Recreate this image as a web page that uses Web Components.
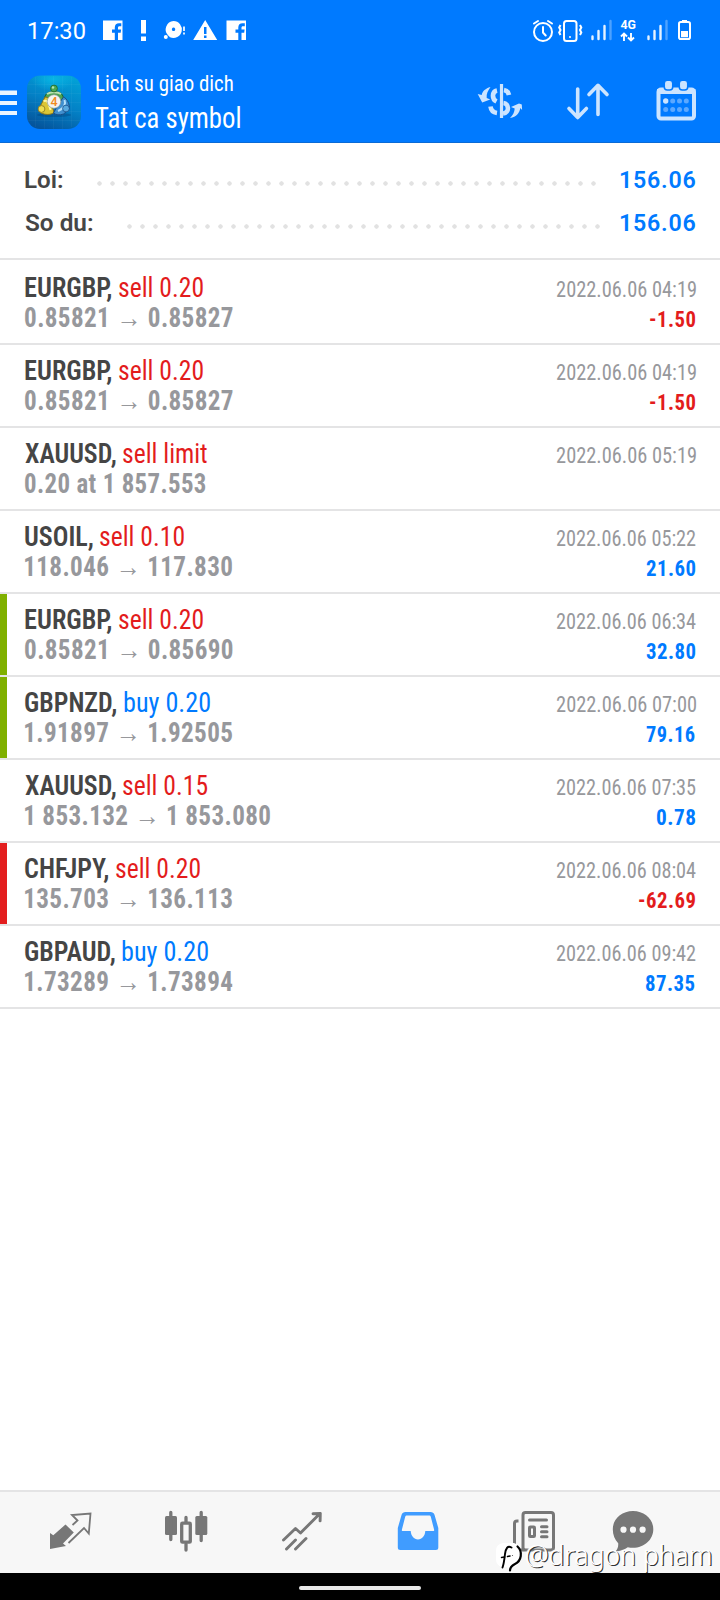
<!DOCTYPE html>
<html lang="vi">
<head>
<meta charset="utf-8">
<title>Lich su giao dich</title>
<style>
html,body{margin:0;padding:0;background:#fff}
body{width:720px;height:1600px;overflow:hidden;font-family:Roboto,"Liberation Sans",sans-serif}
</style>
</head>
<body>
<trade-app></trade-app>
<script>
// Text set to an exact ink width, so that a line keeps its measured length.
const ctx = document.createElement('canvas').getContext('2d');
class FitText extends HTMLElement {
  connectedCallback() {
    const r = this.attachShadow({mode: 'open'});
    const size = this.getAttribute('size'), w = +this.getAttribute('w');
    const weight = this.getAttribute('weight') || 400;
    const fam = this.getAttribute('family') || 'Roboto Condensed';
    const sp = this.getAttribute('spacing') || 0;
    r.innerHTML = `<style>
      :host{display:inline-block;width:${w}px;white-space:pre;flex:none;font:${weight} ${size}px "${fam}",Roboto,sans-serif;line-height:inherit;letter-spacing:${sp}px}
      span{display:inline-block;transform-origin:0 50%}</style><span><slot></slot></span>`;
    ctx.font = `${weight} ${size}px "${fam}", Roboto, sans-serif`;
    ctx.letterSpacing = sp + 'px';
    const m = ctx.measureText(this.textContent);
    const ink = m.actualBoundingBoxRight + m.actualBoundingBoxLeft;
    const k = w / ink;
    r.querySelector('span').style.transform = `translateX(${m.actualBoundingBoxLeft * k}px) scaleX(${k})`;
  }
}
customElements.define('fit-text', FitText);

// name: [x, y, width, height, drawing] — each drawing uses the coordinates of its box.
const fb = x => `<path fill="#fff" fill-rule="evenodd" d="M${x} 20.500h19.500V40h-4.500v-7.300h2.700l.4-3.200h-3.100v-1.800c0-1 .4-1.500 1.600-1.500h1.700v-2.900c-.4 0-1.300-.1-2.300-.1-2.600 0-4.200 1.500-4.200 4.200v2.100h-2.800v3.200h2.800V40H${x}z"/>`;
const sig = x => `<g stroke-width="2.400" stroke="#fff" stroke-linecap="round"><path d="M${x} 36.500v2.500M${x+6} 31v8M${x+12} 26v13" stroke-opacity=".9"/><path d="M${x+18} 21v18" stroke-opacity=".3"/></g>`;
const ICONS = {
  fb1: [100,0,30,60, fb(103)],
  alert: [130,0,25,60, '<path fill="#fff" d="M141 20h5v13.500h-5zM141 36.500h5V41h-5z"/>'],
  bubble: [155,0,35,60, '<path fill="#fff" fill-rule="evenodd" d="M173.500 21a8.500 8.500 0 1 1-3.500 16.300l-2-2a8.500 8.500 0 0 1 5.500-14.300zm0 6.600a1.700 1.700 0 1 0 .1 0z"/><circle cx="165.800" cy="37" r="2" fill="#fff"/><path stroke="#fff" stroke-width="1.700" d="M184 26.500v4.500M184 32.500v2"/>'],
  warn: [190,0,31,60, '<path fill="#fff" fill-rule="evenodd" d="M205.200 20l12 20h-24zm-1.200 7v7h2.500v-7zm0 8.500V38h2.500v-2.500z"/>'],
  fb2: [221,0,30,60, fb(226.500)],
  alarm: [530,0,25,60, '<g fill="none" stroke="#fff" stroke-width="2" stroke-linecap="round"><circle cx="543" cy="32" r="9"/><path d="M543 27v5.500l2.700 3M534 23.500l4-2.500M548 21l4 2.500"/></g>'],
  vibrate: [555,0,31,60, '<g fill="none" stroke="#fff" stroke-width="2"><rect x="564" y="21" width="12.500" height="20" rx="2.500"/><path stroke-width="2" d="M560.500 25l-1.300 2.500 1.300 2.500-1.300 2.500 1.300 2.500M580 25l1.300 2.500-1.300 2.500 1.300 2.500-1.300 2.500"/></g><circle cx="570" cy="37" r="1" fill="#fff"/>'],
  signal1: [586,0,32,60, sig(592.500)],
  lte: [618,0,22,60, '<text x="620.500" y="29" fill="#fff" font-family="Roboto" font-weight="700" font-size="13" textLength="15.500" lengthAdjust="spacingAndGlyphs">4G</text><path fill="none" stroke="#fff" stroke-width="1.900" d="M624 41v-6.500M621 36.500l3-3 3 3M631 33v6.500M628 37.500l3 3 3-3"/>'],
  signal2: [640,0,32,60, sig(648.500)],
  battery: [672,0,24,60, '<rect x="679" y="22" width="11" height="17" rx="1.800" fill="none" stroke="#fff" stroke-width="2"/><path fill="#fff" d="M682 20h5v2h-5zM681 31h7v6.300h-7z"/>'],
  menu: [0,60,27,82, '<path fill="#fff" d="M0 90.500h17v4.500H0zM0 101h17v4H0zM0 111h17v4H0z" fill-opacity=".92"/>'],
  app: [27,60,69,82, `<defs><linearGradient id="g" x1=".7" y1="0" x2=".3" y2="1"><stop offset="0" stop-color="#02a0d6"/><stop offset=".5" stop-color="#0381c6"/><stop offset="1" stop-color="#05549b"/></linearGradient>
    <radialGradient id="s"><stop offset="0" stop-color="#08b4e4"/><stop offset="1" stop-color="#08b4e4" stop-opacity="0"/></radialGradient>
    <clipPath id="c"><rect x="27" y="75.500" width="54" height="53.500" rx="13"/></clipPath></defs>
    <g clip-path="url(#c)"><rect x="27" y="75.500" width="54" height="53.500" fill="url(#g)"/><ellipse cx="53" cy="79" rx="22" ry="12" fill="url(#s)"/>
    <path stroke="#fff" stroke-opacity=".04" d="M35.500 77v50M44.500 76v53M53.500 76v53M62.500 76v53M71.500 77v50M28 84.500h52M27 93.500h54M27 102.500h54M27 111.500h54M28 120.500h52"/></g>
    <ellipse cx="54" cy="115" rx="17" ry="2" fill="#023a70" opacity=".35"/>
    <g stroke-linejoin="round"><path d="M44.500 99.500c0-5 3-8 9.500-8s9.500 3 9.500 8l-4 3h-11z" fill="#4ba352" stroke="#1d6528"/><path d="M47 94c3-2.300 11-2.300 14 0" stroke="#b8e0b1" stroke-width="1.800" fill="none"/><circle cx="54" cy="88.500" r="3.400" fill="#4aa853" stroke="#1d6528" stroke-width=".8"/><circle cx="53" cy="87.500" r="1.200" fill="#b4e3ae"/>
    <path d="M45 97c3 0 5 2 6 5l3 10.500c-3 2.500-9 2.500-13 .5l-2.500-3.500z" fill="#dcc636" stroke="#85721c"/><path d="M43.500 101c3-1 4 0 5.500 4l1.500 5" stroke="#fff6a2" stroke-width="2" fill="none"/><circle cx="41.500" cy="109" r="3.400" fill="#f0df52" stroke="#85721c" stroke-width=".8"/>
    <path d="M63.500 97c4 2 6 7 6 12l-6 5c-4 1.500-7.500 1-10-1l5-9z" fill="#3f8fcf" stroke="#194f89"/><path d="M64.500 100c1.500 4 0 8-6.500 11" stroke="#b4e0fa" stroke-width="2" fill="none"/><circle cx="66" cy="108.500" r="3.400" fill="#58a9df" stroke="#194f89" stroke-width=".8"/></g>
    <circle cx="54" cy="101.500" r="6.800" fill="#f4f4f0" stroke="#8d9a95" stroke-width=".7"/><text x="54" y="106" text-anchor="middle" font-family="Roboto" font-weight="500" font-size="12.500" fill="#f08a1c">4</text>`],
  money: [474,60,54,82, `<g stroke="#cce4ff" fill="none" stroke-width="4.600"><path stroke-width="3.200" d="M501.500 84v34"/>
    <path d="M497 90.500c-5 1-5.500 8.500-.5 11M490.500 106.500c.5 4 3 6 6.500 6.500M504 90c3 .5 4.500 2 5 5M503.500 103c5.500.5 6.500 9.500-.5 10.500"/></g>
    <g fill="#cce4ff"><path d="M490.500 87c-5 1.500-8 4-8.800 8l-4-1 4.500 8.500 8-3-3.500-1.500c-.5-4 1.300-7.500 3.800-11z"/><path d="M510 118c6.500-1.200 9.600-5 10.300-10l1.800 2-.3-5.500-2.800-.9-8 3.500 3.700 1.300c-.2 3.500-1.600 6.500-4.700 9.600z"/></g>`],
  sort: [528,60,112,82, '<g fill="none" stroke="#cce4ff" stroke-width="3.600" stroke-linecap="round" stroke-linejoin="round"><path d="M577.700 89v28.500M569 108.500l8.700 9 8.700-9M598 114.500V85.500M589 94.500l9-9.200 9 9.200"/></g>'],
  calendar: [640,60,80,82, `<rect x="658.500" y="89.500" width="35.500" height="29" rx="2.500" fill="none" stroke="#cce4ff" stroke-width="4"/><path fill="#cce4ff" d="M657 89h38.500v5H657z"/>
    <g fill="#cce4ff" stroke="#007aff" stroke-width="1.500"><rect x="664.300" y="80.200" width="8.400" height="9.800" rx="3"/><rect x="679.300" y="80.200" width="8.400" height="9.800" rx="3"/></g>
    <circle cx="665.700" cy="101" r="2.700" fill="#cce4ff"/><g fill="#5ca8ff"><circle cx="672.700" cy="101" r="2.500"/><circle cx="679.500" cy="101" r="2.500"/><circle cx="686.300" cy="101" r="2.500"/><circle cx="665.700" cy="109.500" r="2.500"/><circle cx="672.700" cy="109.500" r="2.500"/><circle cx="679.500" cy="109.500" r="2.500"/><circle cx="686.300" cy="109.500" r="2.500"/></g>`],
  trade: [0,1492,128,81, '<path fill="#777" d="M65.500 1524.500l8.300 8-10.800 11 3 2.500-16 3v-16l3.300 2.300z"/><path fill="none" stroke="#777" stroke-width="1.800" d="M72.500 1525l5-4.500-5.500-5.500 18.500-1.500-1.700 20-4.800-5.500-15.500 15"/>'],
  candles: [128,1492,108,81, '<g fill="#777"><rect x="165" y="1516" width="12" height="19" rx="1.500"/><rect x="195.300" y="1516" width="12" height="19" rx="1.500"/></g><g stroke="#777" fill="none" stroke-width="3.300" stroke-linecap="round"><path d="M170.800 1512.500v27M201.200 1512.500v28M186 1517.500v4.500M186 1544v6"/><rect x="181.700" y="1523.200" width="8.600" height="19" rx=".8"/></g>'],
  chart: [236,1492,108,81, '<path fill="none" stroke="#777" stroke-width="2.900" stroke-linecap="round" stroke-linejoin="round" d="M283.500 1540l12-11.500 5 4.500 19.500-19.500M313 1513.700l7.300-.3-.2 7.500M286.500 1549l9-9M295.500 1549l10.500-10.500"/>'],
  inbox: [344,1492,128,81, '<path fill="#409cff" fill-rule="evenodd" d="M405.500 1512h25c2 0 3.300 1 4 2.800l3.800 13.200v19.500q0 2.500-2.500 2.500h-35.500q-2.500 0-2.500-2.500V1528l3.800-13.200c.7-1.800 1.900-2.800 3.900-2.800zm1.500 3.500c-1 0-1.500.4-1.800 1.300l-3.400 13.200c0 .8.200 1 1 1h7.900c.3 5 3.300 8.400 7.300 8.400s7-3.400 7.300-8.400h7.900c.8 0 1-.2 1-1l-3.400-13.200c-.3-.9-.8-1.300-1.800-1.300z"/>'],
  news: [472,1492,108,81, '<g fill="none" stroke="#777"><rect x="523" y="1512.500" width="30.500" height="37.500" rx="2.500" stroke-width="3"/><path stroke-width="3" d="M518.500 1521h-1.500q-2.500 0-2.500 2.500V1546q0 4 4 4h6"/><path stroke-width="3" stroke-linecap="round" d="M529.500 1520h17M541.500 1526.700h5.500M541.500 1531.700h5.500M541.500 1536.700h5.500"/><rect x="529.500" y="1527" width="5" height="9.500" rx=".8" stroke-width="3"/></g>'],
  chat: [580,1492,140,81, '<path fill="#777" d="M633 1511c11.500 0 20.300 8 20.300 18.300s-8.800 18.500-20.300 18.500c-1.800 0-3.600-.2-5.200-.6-2.800 2.300-7.300 4-12.300 4 2-2 3-4.500 2.700-8-3.500-3.400-5.400-8.200-5.400-13.900 0-10.300 8.700-18.300 20.200-18.300z"/><g fill="#f7f7f7"><circle cx="623.500" cy="1529.700" r="3.100"/><circle cx="633" cy="1529.700" r="3.100"/><circle cx="642.600" cy="1529.700" r="3.100"/></g>'],
  mark: [494,1538,32,38, '<path fill="#fff" d="M503 1543h11q8 2 7.500 12.500-.5 10-8 11.500l-5.500 2-1-2h-5q-6-1.500-6-8v-8q0-7 7-8z"/><g fill="none" stroke="#000" stroke-linecap="round" stroke-width="1.500"><path stroke-width="1.900" d="M511.500 1547.500c-4-2-5.500.5-6.500 6.500-.6 5-1 9.500-2.500 13.500"/><path d="M501.500 1557.500l3-.4M507.500 1556.500l2.500-.5"/><path stroke-width="2.200" d="M517.500 1546.500c5.500 5 4 14.500-2.500 17.500-3 1.500-5 3.500-5 6.500"/></g><circle cx="512.500" cy="1555.500" r=".6" fill="#555"/>']
};
class UiIcon extends HTMLElement {
  connectedCallback() {
    const [x, y, w, h, art] = ICONS[this.getAttribute('name')];
    this.attachShadow({mode: 'open'}).innerHTML = `<style>:host{display:block;flex:none;width:${w}px;height:${h}px}svg{display:block}</style><svg width="${w}" height="${h}" viewBox="${x} ${y} ${w} ${h}">${art}</svg>`;
  }
}
customElements.define('ui-icon', UiIcon);

const icons = s => s.split(' ').map(n => `<ui-icon name="${n}"></ui-icon>`).join('');
const define = (name, html) => customElements.define(name, class extends HTMLElement {
  connectedCallback() { this.attachShadow({mode: 'open'}).innerHTML = html; }
});

define('status-bar', `<style>:host{display:flex;height:60px;line-height:63px;color:#fff;padding:0 24px 0 28.500px;box-sizing:border-box;justify-content:space-between}div{display:flex}fit-text{margin-right:15px}</style>
  <div><fit-text family="Roboto" size="24" w="56.500">17:30</fit-text>${icons('fb1 alert bubble warn fb2')}</div>
  <div>${icons('alarm vibrate signal1 lte signal2 battery')}</div>`);

define('tool-bar', `<style>:host{display:flex;height:83px;box-sizing:border-box;border-bottom:1px solid #0a6bd6;color:#fff}
  .t{display:flex;flex-direction:column;flex:1;padding-top:6.500px;line-height:32px}.t fit-text+fit-text{line-height:38px;margin-left:-1px}</style>
  ${icons('menu app')}<div class="t"><fit-text size="22.500" w="137">Lich su giao dich</fit-text><fit-text size="29" w="145" weight="400">Tat ca symbol</fit-text></div>${icons('money sort calendar')}`);

customElements.define('summary-line', class extends HTMLElement {
  connectedCallback() {
    const a = n => this.getAttribute(n);
    this.attachShadow({mode: 'open'}).innerHTML = `<style>:host{display:flex;height:43px;line-height:45px;padding:0 25.500px 0 24.500px;color:#464646}
      i{width:${a('dots')}px;margin-left:auto;margin-right:${a('gap')}px;height:13px;margin-top:19px;background:radial-gradient(circle at 6.500px 6.500px,#e2e2e2 1.900px,transparent 2.500px) 0 0/13px 13px}
      .v{color:#007aff}</style>
      <fit-text family="Roboto" size="24" weight="600" w="${a('w')}">${a('label')}</fit-text><i></i><fit-text class="v" family="Roboto" size="24" weight="600" spacing=".8" w="75">${a('value')}</fit-text>`;
  }
});

customElements.define('deal-row', class extends HTMLElement {
  connectedCallback() {
    const [sym, sw, gap, op, ow, det, dw, date, pl, pw, bar] = this.data;
    const red = '#e31c1c', blue = '#007aff';
    this.attachShadow({mode: 'open'}).innerHTML = `<style>
      :host{display:block;height:83px;padding:11px 24.500px 0 25px;box-sizing:border-box;border-bottom:2px solid #e4e4e5;background:linear-gradient(${bar || '#fff'},${bar || '#fff'}) 0 0/7px 100% no-repeat #fff}
      div{display:flex;height:30px;line-height:30px;align-items:baseline;color:#97989c}
      .s{color:#454545;margin-left:-.5px}.o{margin-left:${gap}px;color:${op[0] == 's' ? red : blue}}.r{margin-left:auto}.p{margin-right:.7px;color:${pl[0] == '-' ? red : blue}}</style>
      <div><fit-text class="s" weight="600" size="27.500" w="${sw}">${sym},</fit-text><fit-text class="o" size="27.500" w="${ow + .5}">${op}</fit-text><fit-text class="r" size="22.500" w="139">${date}</fit-text></div>
      <div><fit-text weight="700" size="27.300" spacing=".4" w="${dw + .7}">${det}</fit-text>${pl ? `<fit-text class="r p" weight="700" size="21.800" spacing=".5" w="${pw}">${pl}</fit-text>` : ''}</div>`;
  }
});

const G = '#7fb000', R = '#e31e1e', D = '2022.06.06 ';
const DEALS = [
  ['EURGBP',86,8,'sell 0.20',84,'0.85821 → 0.85827',207,D+'04:19','-1.50',45],
  ['EURGBP',86,8,'sell 0.20',84,'0.85821 → 0.85827',207,D+'04:19','-1.50',45],
  ['XAUUSD',90.5,7.5,'sell limit',84,'0.20 at 1 857.553',180,D+'05:19','',0],
  ['USOIL',67.5,7.5,'sell 0.10',84,'118.046 → 117.830',206.5,D+'05:22','21.60',49],
  ['EURGBP',86,8,'sell 0.20',84,'0.85821 → 0.85690',207,D+'06:34','32.80',49,G],
  ['GBPNZD',91,8,'buy 0.20',86,'1.91897 → 1.92505',206.5,D+'07:00','79.16',49,G],
  ['XAUUSD',90.5,7.5,'sell 0.15',84,'1 853.132 → 1 853.080',244.5,D+'07:35','0.78',38],
  ['CHFJPY',83,8,'sell 0.20',84,'135.703 → 136.113',206.5,D+'08:04','-62.69',56,R],
  ['GBPAUD',89.5,7.5,'buy 0.20',86,'1.73289 → 1.73894',206.5,D+'09:42','87.35',49]
];
customElements.define('deal-list', class extends HTMLElement {
  connectedCallback() {
    const r = this.attachShadow({mode: 'open'});
    r.innerHTML = '<style>:host{display:block;border-top:2px solid #e4e4e5;padding-top:2px;flex:1}</style>';
    for (const d of DEALS) { const e = document.createElement('deal-row'); e.data = d; r.append(e); }
  }
});

define('nav-bar', `<style>:host{display:flex;height:81px;background:#f7f7f7;border-top:2px solid #e4e4e5}</style>${icons('trade candles chart inbox news chat')}`);
define('water-mark', `<style>:host{display:flex;position:absolute;left:494px;top:1538px;height:38px;color:#fff;line-height:34px;text-shadow:1.200px 1.200px 0 #333,-.5px -.5px 1px #fff}fit-text{margin-left:-.5px}</style><ui-icon name="mark"></ui-icon><fit-text family="Noto Sans" weight="300" size="27.500" w="185">@dragon pham</fit-text>`);
define('home-bar', `<style>:host{display:flex;height:27px;background:#000;justify-content:center;padding-top:13px;box-sizing:border-box}i{width:122px;height:4px;border-radius:2px;background:#e8e8e8}</style><i></i>`);
define('trade-app', `<style>:host{display:flex;flex-direction:column;width:720px;height:1600px;position:relative;overflow:hidden;background:#fff}
  header{background:#007aff}section{height:100px;padding-top:15px}</style>
  <header><status-bar></status-bar><tool-bar></tool-bar></header>
  <section><summary-line label="Loi:" w="38" value="156.06" dots="507" gap="20"></summary-line><summary-line label="So du:" w="68" value="156.06" dots="481" gap="16"></summary-line></section>
  <deal-list></deal-list><nav-bar></nav-bar><home-bar></home-bar><water-mark></water-mark>`);
</script>
</body>
</html>
